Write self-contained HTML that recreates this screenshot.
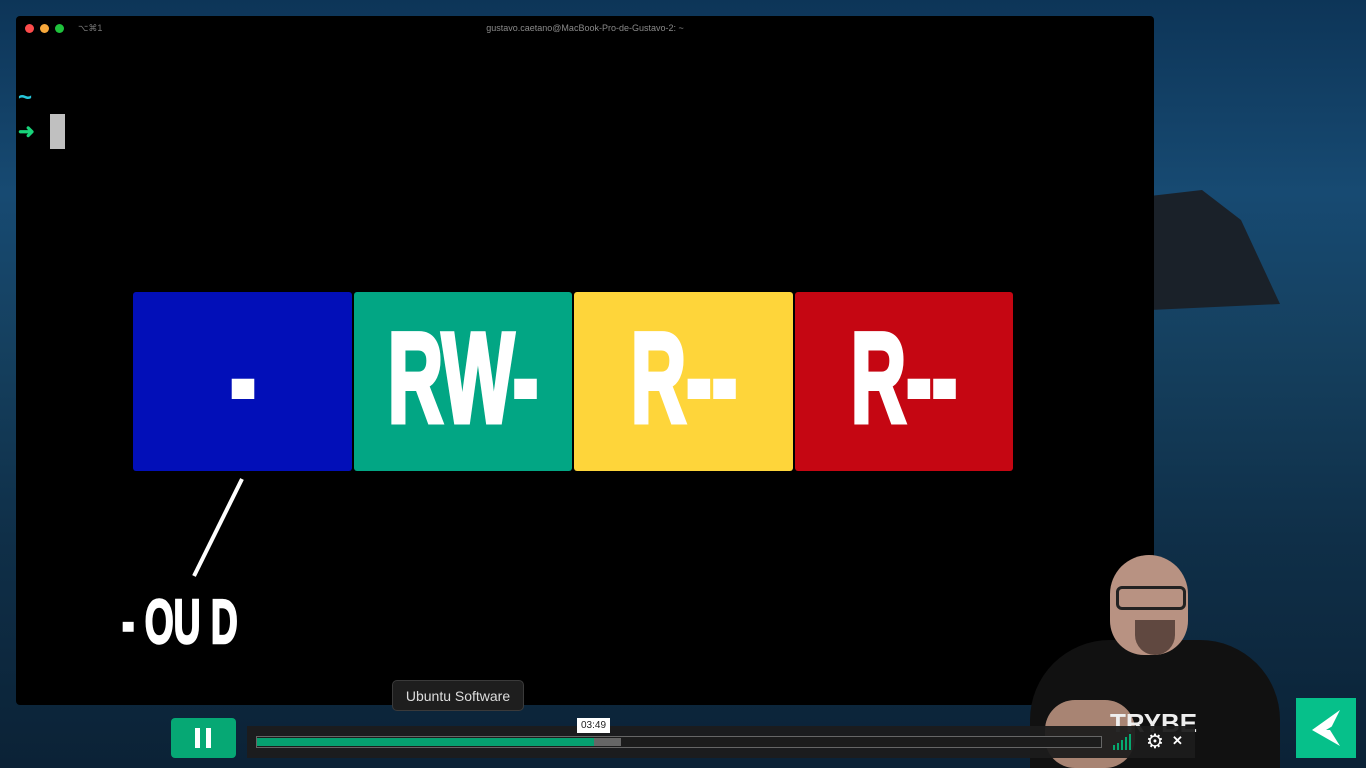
<!DOCTYPE html>
<html><head><meta charset="utf-8"><style>
*{margin:0;padding:0;box-sizing:border-box}
body{width:1366px;height:768px;overflow:hidden;position:relative;font-family:"Liberation Sans",sans-serif;
background:linear-gradient(180deg,#0d3558 0%,#174a72 25%,#15405f 45%,#0f2f48 70%,#0b2236 100%)}
.abs{position:absolute}
.term{left:16px;top:16px;width:1138px;height:689px;background:#000;border-radius:4px}
.blk{top:292px;height:179px;border-radius:3px;color:#fff}
.blk span{position:absolute;left:50%;top:22px;transform:translateX(-50%) scaleX(.6);font-weight:bold;font-size:128px;line-height:130px;white-space:nowrap;font-family:"Liberation Sans",sans-serif;-webkit-text-stroke:5px #fff}
</style></head><body>
<div class="abs" style="left:1150px;top:190px;width:130px;height:120px;background:#1a2129;clip-path:polygon(0 5%,40% 0,70% 25%,100% 95%,0 100%)"></div>
<div class="abs term"></div>
<div class="abs" style="left:25px;top:24px;width:9px;height:9px;border-radius:50%;background:#fc4b4b"></div>
<div class="abs" style="left:40px;top:24px;width:9px;height:9px;border-radius:50%;background:#f7a83b"></div>
<div class="abs" style="left:55px;top:24px;width:9px;height:9px;border-radius:50%;background:#1fc23c"></div>
<div class="abs" style="left:78px;top:23px;font-size:9px;color:#777">⌥⌘1</div>
<div class="abs" style="left:0;width:1170px;top:23px;text-align:center;font-size:9px;color:#8a8a8a">gustavo.caetano@MacBook-Pro-de-Gustavo-2: ~</div>
<div class="abs" style="left:18px;top:84px;font-size:24px;font-weight:bold;color:#26c6da">~</div>
<div class="abs" style="left:18px;top:119px;font-size:20px;font-weight:bold;color:#18d47a">➜</div>
<div class="abs" style="left:50px;top:114px;width:15px;height:35px;background:#c0c0c0"></div>
<div class="abs blk" style="left:133px;width:219px;background:#020fb8"><span>-</span></div>
<div class="abs blk" style="left:354px;width:218px;background:#02a684"><span>RW-</span></div>
<div class="abs blk" style="left:574px;width:219px;background:#fed53a"><span>R--</span></div>
<div class="abs blk" style="left:795px;width:218px;background:#c50612"><span>R--</span></div>
<svg class="abs" style="left:180px;top:475px" width="70" height="105"><line x1="62" y1="4" x2="14" y2="101" stroke="#fff" stroke-width="4"/></svg>
<div class="abs" style="left:122px;top:588px;color:#fff;font-weight:bold;font-size:62px;line-height:70px;white-space:nowrap;-webkit-text-stroke:2.5px #fff"><span style="display:inline-block;transform:scaleX(.6);transform-origin:left">- OU D</span></div>
<!-- person -->
<div class="abs" style="left:1030px;top:640px;width:250px;height:128px;background:#111;border-radius:80px 80px 0 0"></div>
<div class="abs" style="left:1110px;top:555px;width:78px;height:100px;background:#b89282;border-radius:40px 40px 35px 35px"></div>
<div class="abs" style="left:1116px;top:586px;width:70px;height:24px;border:3px solid #222;border-radius:6px"></div>
<div class="abs" style="left:1135px;top:620px;width:40px;height:35px;background:#3a2a24;border-radius:0 0 20px 20px;opacity:.7"></div>
<div class="abs" style="left:1045px;top:700px;width:90px;height:68px;background:#a88473;border-radius:30px"></div>
<div class="abs" style="left:1110px;top:708px;font-size:26px;font-weight:bold;color:#eee">TRYBE</div>
<!-- tooltip -->
<div class="abs" style="left:392px;top:680px;width:132px;height:31px;background:#1e1e1e;border:1px solid #3a3a3a;border-radius:5px;color:#ddd;font-size:14px;line-height:30px;text-align:center">Ubuntu Software</div>
<!-- player -->
<div class="abs" style="left:171px;top:718px;width:65px;height:40px;background:#06a874;border-radius:4px"></div>
<div class="abs" style="left:195px;top:728px;width:5px;height:20px;background:#fff"></div>
<div class="abs" style="left:206px;top:728px;width:5px;height:20px;background:#fff"></div>
<div class="abs" style="left:247px;top:726px;width:948px;height:32px;background:#1c1c1c;opacity:.95"></div>
<div class="abs" style="left:256px;top:736px;width:846px;height:12px;border:1px solid #666;background:#1c1c1c"></div>
<div class="abs" style="left:257px;top:738px;width:337px;height:8px;background:#06a070"></div>
<div class="abs" style="left:594px;top:738px;width:27px;height:8px;background:#666"></div>
<div class="abs" style="left:577px;top:718px;width:33px;height:15px;background:#fff;color:#222;font-size:10px;text-align:center;line-height:15px">03:49</div>
<svg class="abs" style="left:1113px;top:734px" width="24" height="16"><g fill="#06a870"><rect x="0" y="11" width="2" height="5"/><rect x="4" y="9" width="2" height="7"/><rect x="8" y="6" width="2" height="10"/><rect x="12" y="3" width="2" height="13"/><rect x="16" y="0" width="2" height="16"/></g></svg>
<div class="abs" style="left:1146px;top:729px;color:#fff;font-size:20px">⚙</div>
<div class="abs" style="left:1172px;top:733px;color:#fff;font-size:13px;font-weight:bold">✕</div>
<div class="abs" style="left:1296px;top:698px;width:60px;height:60px;background:#06c08a"></div>
<svg class="abs" style="left:1296px;top:698px" width="60" height="60"><path d="M44 12 L16 32 L44 48 L34 32 Z" fill="#fff"/><path d="M30 32 L40 26 L38 32 Z" fill="#06c08a"/></svg>
</body></html>
